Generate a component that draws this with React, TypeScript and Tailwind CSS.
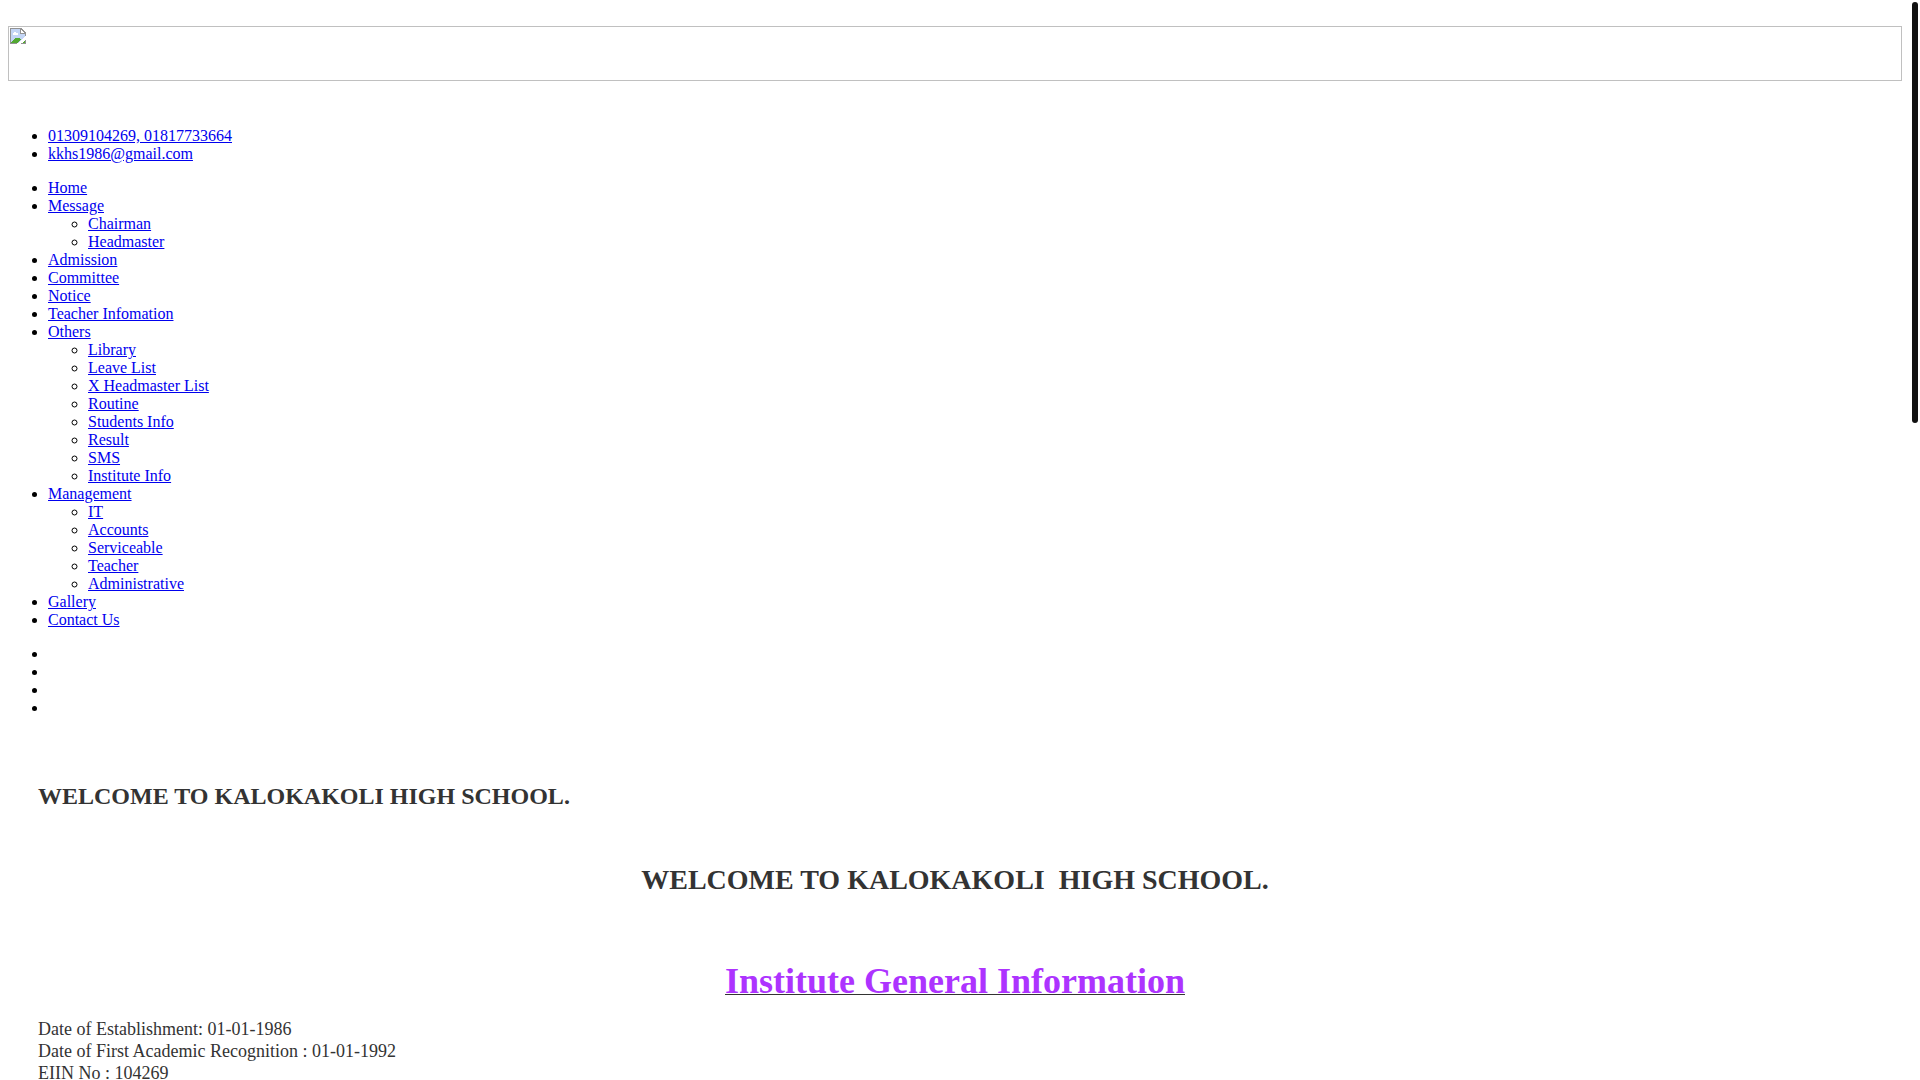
type MenuItem = {
  label: string;
  children?: string[];
};

const contacts = ['01309104269, 01817733664', 'kkhs1986@gmail.com'];

const menuItems: MenuItem[] = [
  { label: 'Home' },
  { label: 'Message', children: ['Chairman', 'Headmaster'] },
  { label: 'Admission' },
  { label: 'Committee' },
  { label: 'Notice' },
  { label: 'Teacher Infomation' },
  {
    label: 'Others',
    children: ['Library', 'Leave List', 'X Headmaster List', 'Routine', 'Students Info', 'Result', 'SMS', 'Institute Info'],
  },
  { label: 'Management', children: ['IT', 'Accounts', 'Serviceable', 'Teacher', 'Administrative'] },
  { label: 'Gallery' },
  { label: 'Contact Us' },
];

const slides = [1, 2, 3, 4];

const facts = [
  'Date of Establishment: 01-01-1986',
  'Date of First Academic Recognition : 01-01-1992',
  'EIIN No : 104269',
];

function TextLink({ label }: { label: string }) {
  return (
    <a href="#" className="text-[#0000ee] underline">
      {label}
    </a>
  );
}

// Banner placeholder with the missing image icon
function Banner() {
  return (
    <div className="h-[55px] border border-[#c0c0c0] p-px">
      <svg width="16" height="16" viewBox="0 0 16 16" shapeRendering="crispEdges" aria-hidden="true">
        <path d="M1 1h10l4 4v10H1z" fill="#c3d5f5" />
        <path d="M3 5h1V4h2v1h2v2H3z" fill="#fff" />
        <path d="M1 15v-1l3-3 2-1h3l2 2-4 3z" fill="#52a832" />
        <path d="M11 15l4-3v3z" fill="#52a832" />
        <path d="M7 16l9-8v3l-5 5z" fill="#fff" />
        <path d="M0.5 15.5V0.5H11M15.5 5V8M0 15.5H7M11 15.5H16M15.5 12V16" fill="none" stroke="#929292" />
        <path d="M11 1v4h4z" fill="#fff" />
        <path d="M10.5 1v4.5H15M11 0.5L15.5 5" fill="none" stroke="#929292" />
      </svg>
    </div>
  );
}

export default function App() {
  return (
    <div className="min-h-screen bg-white pt-[26px] pr-[18px] pl-2 font-['Times_New_Roman','Liberation_Serif',serif] text-base leading-[18px] text-black">
      <header>
        <Banner />
        <ul className="mt-[46px] list-disc pl-10">
          {contacts.map((c) => (
            <li key={c}>
              <TextLink label={c} />
            </li>
          ))}
        </ul>
        <nav className="mt-4">
          <ul className="list-disc pl-10">
            {menuItems.map((item) => (
              <li key={item.label}>
                <TextLink label={item.label} />
                {item.children && (
                  <ul className="list-[circle] pl-10">
                    {item.children.map((child) => (
                      <li key={child}>
                        <TextLink label={child} />
                      </li>
                    ))}
                  </ul>
                )}
              </li>
            ))}
          </ul>
        </nav>
      </header>

      {/* Slider */}
      <ul className="mt-4 list-disc pl-10">
        {slides.map((s) => (
          <li key={s} className="h-[18px]" />
        ))}
      </ul>

      <main className="px-[30px] pt-[65px] text-[#333333]">
        <h2 className="text-2xl leading-7 font-bold">WELCOME TO KALOKAKOLI HIGH SCHOOL.</h2>
        <h2 className="mt-[54px] text-center text-[28px] leading-8 font-bold">
          WELCOME TO KALOKAKOLI&nbsp; HIGH SCHOOL.
        </h2>
        <h1 className="mt-16 text-center text-4xl leading-[42px] font-bold underline decoration-1 underline-offset-1">
          <span className="text-[#ad33ff]">Institute General Information</span>
        </h1>
        <div className="mt-4 text-lg leading-[22px]">
          {facts.map((f) => (
            <p key={f}>{f}</p>
          ))}
        </div>
      </main>

      {/* Scroll indicator */}
      <div className="fixed top-0.5 right-0.5 h-[39vh] w-1.5 rounded-full bg-[#111111]" />
    </div>
  );
}
